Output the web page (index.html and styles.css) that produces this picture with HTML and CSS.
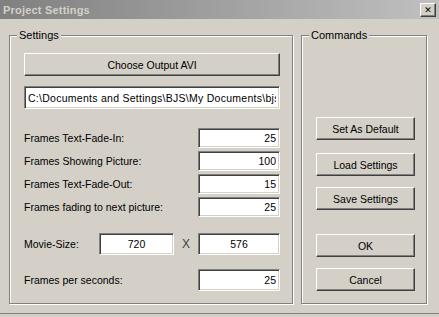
FILE: index.html
```html
<!DOCTYPE html>
<html lang="en">
<head>
    <meta charset="UTF-8">
    <title>Project Settings</title>
    <link rel="stylesheet" href="styles.css">
</head>
<body>
    <div class="titlebar">
        <span class="title">Project Settings</span>
        <button class="close-btn">&#x2715;</button>
    </div>
    <div class="content">
        <div class="group settings">
            <div class="group-title">Settings</div>
            <div class="group-body">
                <button class="btn wide">Choose Output AVI</button>
                <input class="field path" type="text" value="C:\Documents and Settings\BJS\My Documents\bjs\Slideshow.avi">

                <div class="rows">
                    <div class="row">
                        <span>Frames Text-Fade-In:</span>
                        <input class="field num" type="text" value="25">
                    </div>
                    <div class="row">
                        <span>Frames Showing Picture:</span>
                        <input class="field num" type="text" value="100">
                    </div>
                    <div class="row">
                        <span>Frames Text-Fade-Out:</span>
                        <input class="field num" type="text" value="15">
                    </div>
                    <div class="row">
                        <span>Frames fading to next picture:</span>
                        <input class="field num" type="text" value="25">
                    </div>
                </div>

                <div class="row size-row">
                    <span class="size-label">Movie-Size:</span>
                    <input class="field size" type="text" value="720">
                    <span class="times">X</span>
                    <input class="field size num-wide" type="text" value="576">
                </div>

                <div class="row fps-row">
                    <span>Frames per seconds:</span>
                    <input class="field num tall" type="text" value="25">
                </div>
            </div>
        </div>

        <div class="group commands">
            <div class="group-title">Commands</div>
            <div class="group-body cmd-body">
                <button class="btn cmd first">Set As Default</button>
                <button class="btn cmd">Load Settings</button>
                <button class="btn cmd">Save Settings</button>
                <button class="btn cmd gap">OK</button>
                <button class="btn cmd">Cancel</button>
            </div>
        </div>
    </div>
    <div class="frame-bottom"></div>
</body>
</html>
```

FILE: styles.css
```css
body {
    margin: 0;
    width: 439px;
    height: 317px;
    overflow: hidden;
    background-color: #d4d0c8;
    font-family: 'Liberation Sans', Arial, sans-serif;
    font-size: 10.5px;
    color: #000;
}

/* title bar (inactive window) */
.titlebar {
    height: 19px;
    display: flex;
    align-items: center;
    justify-content: space-between;
    padding: 0 3px 0 3px;
    background: linear-gradient(to right, #808080, #c0c0c0);
}

.title {
    color: #d4d0c8;
    font-weight: bold;
    font-size: 11px;
    letter-spacing: 0.2px;
}

.close-btn {
    width: 16px;
    height: 14px;
    padding: 0;
    margin-top: 1px;
    font-family: 'DejaVu Sans', sans-serif;
    font-size: 9px;
    font-weight: bold;
    line-height: 10px;
    color: #000;
    background-color: #d4d0c8;
    border: 1px solid;
    border-color: #fff #404040 #404040 #fff;
    box-shadow: inset -1px -1px #808080;
}

.content {
    display: flex;
    gap: 8px;
    padding: 16px 0 0 9px;
}

/* etched group box */
.group {
    height: 269px;
    box-sizing: border-box;
    border: 1px solid #808080;
    box-shadow: inset 1px 1px #fff, 1px 1px #fff;
}

.settings {
    width: 284px;
}

.commands {
    width: 126px;
}

.group-title {
    width: fit-content;
    height: 13px;
    line-height: 13px;
    margin: -7px 0 0 7px;
    padding: 0 2px;
    font-size: 11px;
    background-color: #d4d0c8;
}

.group-body {
    display: flex;
    flex-direction: column;
    padding: 11px 12px 0 14px;
}

/* controls */
.btn {
    height: 23px;
    padding: 0;
    font-family: inherit;
    font-size: 10.5px;
    color: #000;
    background-color: #d4d0c8;
    border: 1px solid;
    border-color: #fff #404040 #404040 #fff;
    box-shadow: inset -1px -1px #808080;
}

.field {
    box-sizing: border-box;
    height: 20px;
    margin: 0;
    padding: 0 3px;
    font-family: inherit;
    font-size: 10.5px;
    color: #000;
    background-color: #fff;
    border: 1px solid;
    border-color: #808080 #fff #fff #808080;
    box-shadow: inset 1px 1px #404040, inset -1px -1px #d4d0c8;
    outline: none;
}

.path {
    height: 23px;
    margin-top: 10px;
    padding-left: 3px;
    letter-spacing: 0.27px;
}

.rows {
    display: flex;
    flex-direction: column;
    gap: 3px;
    margin-top: 19px;
}

.row {
    display: flex;
    align-items: center;
    justify-content: space-between;
    height: 20px;
}

.num {
    width: 82px;
    text-align: right;
}

.size-row {
    height: 22px;
    margin-top: 16px;
    justify-content: flex-start;
}

.size-label {
    width: 75px;
}

.size {
    width: 75px;
    height: 22px;
    text-align: center;
}

.times {
    flex: 1;
    text-align: center;
    color: #404040;
    font-size: 12px;
}

.num-wide {
    width: 82px;
}

.fps-row {
    height: 22px;
    margin-top: 14px;
}

.tall {
    height: 22px;
}

.cmd-body {
    padding-right: 0;
}

.cmd {
    width: 99px;
    margin-top: 11px;
}

.cmd.first {
    margin-top: 64px;
}

.cmd:nth-child(2) {
    margin-top: 13px;
}

.cmd.gap {
    margin-top: 24px;
}

.frame-bottom {
    margin-top: 9px;
    border-top: 1px solid #808080;
}
```
